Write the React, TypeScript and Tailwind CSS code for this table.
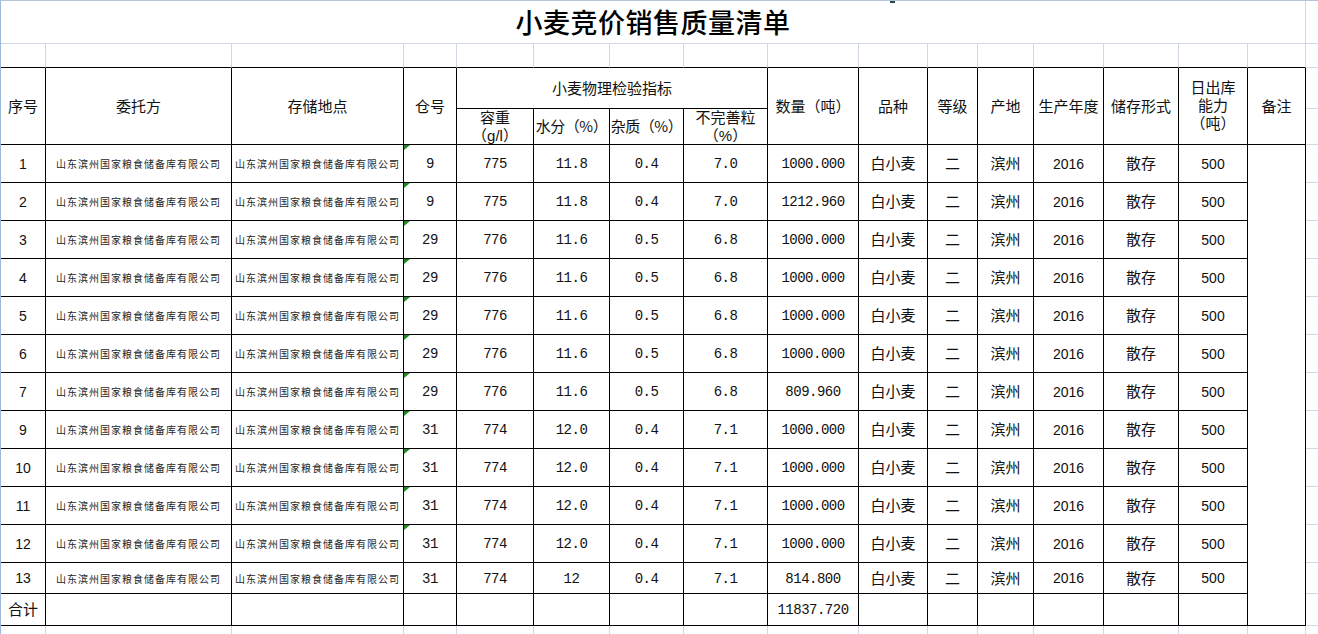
import React from "react";

type Row = {
  no: string;
  bin: string;
  weight: string;
  water: string;
  impurity: string;
  imperfect: string;
  qty: string;
  mark: boolean;
};

const rows: Row[] = [
  { no: "1", bin: "9", weight: "775", water: "11.8", impurity: "0.4", imperfect: "7.0", qty: "1000.000", mark: true },
  { no: "2", bin: "9", weight: "775", water: "11.8", impurity: "0.4", imperfect: "7.0", qty: "1212.960", mark: true },
  { no: "3", bin: "29", weight: "776", water: "11.6", impurity: "0.5", imperfect: "6.8", qty: "1000.000", mark: true },
  { no: "4", bin: "29", weight: "776", water: "11.6", impurity: "0.5", imperfect: "6.8", qty: "1000.000", mark: true },
  { no: "5", bin: "29", weight: "776", water: "11.6", impurity: "0.5", imperfect: "6.8", qty: "1000.000", mark: true },
  { no: "6", bin: "29", weight: "776", water: "11.6", impurity: "0.5", imperfect: "6.8", qty: "1000.000", mark: true },
  { no: "7", bin: "29", weight: "776", water: "11.6", impurity: "0.5", imperfect: "6.8", qty: "809.960", mark: true },
  { no: "9", bin: "31", weight: "774", water: "12.0", impurity: "0.4", imperfect: "7.1", qty: "1000.000", mark: true },
  { no: "10", bin: "31", weight: "774", water: "12.0", impurity: "0.4", imperfect: "7.1", qty: "1000.000", mark: true },
  { no: "11", bin: "31", weight: "774", water: "12.0", impurity: "0.4", imperfect: "7.1", qty: "1000.000", mark: true },
  { no: "12", bin: "31", weight: "774", water: "12.0", impurity: "0.4", imperfect: "7.1", qty: "1000.000", mark: true },
  { no: "13", bin: "31", weight: "774", water: "12", impurity: "0.4", imperfect: "7.1", qty: "814.800", mark: false },
];

const company = "山东滨州国家粮食储备库有限公司";

// plain excel gridline cell
const gl = "border-r border-b border-[#d0d7e5]";
// bordered table cell
const td = "border-r border-b border-black flex items-center justify-center text-center";
const stack = "border-r border-b border-black flex flex-col items-center justify-center text-center";
const mono = "font-['Liberation_Mono','Noto_Sans_CJK_SC',monospace] text-[14px] tracking-[-0.5px] pt-[2px]";
const sans = "font-['Liberation_Sans',sans-serif] text-[14px] pt-[1px]";
const small = "text-[10px] tracking-[1px] text-[#262626] whitespace-nowrap";
const extra = "border-b border-[#d0d7e5]";
// multi-line header lines: latin primary font keeps the line boxes inside 18px
const line = "block h-[18px] leading-[18px] whitespace-nowrap font-['Liberation_Sans','Noto_Sans_CJK_SC',sans-serif]";

function Mark() {
  return (
    <span className="absolute left-0 top-0 h-[5px] w-[6px] bg-[#1f8a24] [clip-path:polygon(0_0,100%_0,0_100%)]" />
  );
}

export default function App() {
  return (
    <div className="relative h-[634px] w-[1318px] overflow-hidden border-l border-t border-l-[#9fb9d8] border-t-[#b5c5d9] bg-white font-['Noto_Sans_CJK_SC',sans-serif] text-[15px] text-[#111]">
      <span className="absolute left-[889px] top-0 h-[2px] w-[5px] bg-[#23484a]" />
      <div className="grid grid-cols-[45px_186px_172px_53px_77px_76px_74px_84px_91px_69px_50px_56px_70px_75px_69px_58px_12px] grid-rows-[43px_24px_41px_36px_repeat(11,38px)_31px_32px_9px]">
        {/* title row */}
        <div className={`col-span-16 ${gl} flex items-center justify-center text-[27px] font-medium tracking-[0.5px] text-black`}>
          小麦竞价销售质量清单
        </div>
        <div className={extra} />

        {/* spacer row */}
        {Array.from({ length: 16 }, (_, i) => (
          <div key={i} className="border-r border-b border-r-[#d0d7e5] border-b-black" />
        ))}
        <div className={extra} />

        {/* header */}
        <div className={`row-span-2 ${td}`}>序号</div>
        <div className={`row-span-2 ${td}`}>委托方</div>
        <div className={`row-span-2 ${td}`}>存储地点</div>
        <div className={`row-span-2 ${td}`}>仓号</div>
        <div className={`col-span-4 ${td}`}>小麦物理检验指标</div>
        <div className={`row-span-2 ${td}`}>数量（吨）</div>
        <div className={`row-span-2 ${td}`}>品种</div>
        <div className={`row-span-2 ${td}`}>等级</div>
        <div className={`row-span-2 ${td}`}>产地</div>
        <div className={`row-span-2 ${td}`}>生产年度</div>
        <div className={`row-span-2 ${td}`}>储存形式</div>
        <div className={`row-span-2 ${stack}`}>
          <span className={line}>日出库</span>
          <span className={line}>能力</span>
          <span className={line}>（吨）</span>
        </div>
        <div className={`row-span-2 ${td}`}>备注</div>
        <div className={extra} />

        <div className={stack}>
          <span className={line}>容重</span>
          <span className={line}>（g/l）</span>
        </div>
        <div className={`${td} whitespace-nowrap tracking-[-0.5px]`}>水分（%）</div>
        <div className={`${td} whitespace-nowrap tracking-[-0.5px]`}>杂质（%）</div>
        <div className={stack}>
          <span className={line}>不完善粒</span>
          <span className={line}>（%）</span>
        </div>
        <div className={extra} />

        {/* data */}
        {rows.map((r, i) => (
          <React.Fragment key={r.no}>
            <div className={`${td} ${sans}`}>{r.no}</div>
            <div className={`${td} ${small}`}>{company}</div>
            <div className={`${td} ${small}`}>{company}</div>
            <div className={`relative ${td} ${mono}`}>
              {r.mark && <Mark />}
              {r.bin}
            </div>
            <div className={`${td} ${mono}`}>{r.weight}</div>
            <div className={`${td} ${mono}`}>{r.water}</div>
            <div className={`${td} ${mono}`}>{r.impurity}</div>
            <div className={`${td} ${mono}`}>{r.imperfect}</div>
            <div className={`${td} ${mono}`}>{r.qty}</div>
            <div className={td}>白小麦</div>
            <div className={td}>二</div>
            <div className={td}>滨州</div>
            <div className={`${td} ${sans}`}>2016</div>
            <div className={td}>散存</div>
            <div className={`${td} ${sans}`}>500</div>
            {i === 0 && <div className={`row-span-13 ${td}`} />}
            <div className={extra} />
          </React.Fragment>
        ))}

        {/* total */}
        <div className={td}>合计</div>
        <div className={td} />
        <div className={td} />
        <div className={td} />
        <div className={td} />
        <div className={td} />
        <div className={td} />
        <div className={td} />
        <div className={`${td} ${mono}`}>11837.720</div>
        <div className={td} />
        <div className={td} />
        <div className={td} />
        <div className={td} />
        <div className={td} />
        <div className={td} />
        <div className={extra} />

        {/* partial row below */}
        {Array.from({ length: 16 }, (_, i) => (
          <div key={i} className="border-r border-[#d0d7e5]" />
        ))}
        <div />
      </div>
    </div>
  );
}
